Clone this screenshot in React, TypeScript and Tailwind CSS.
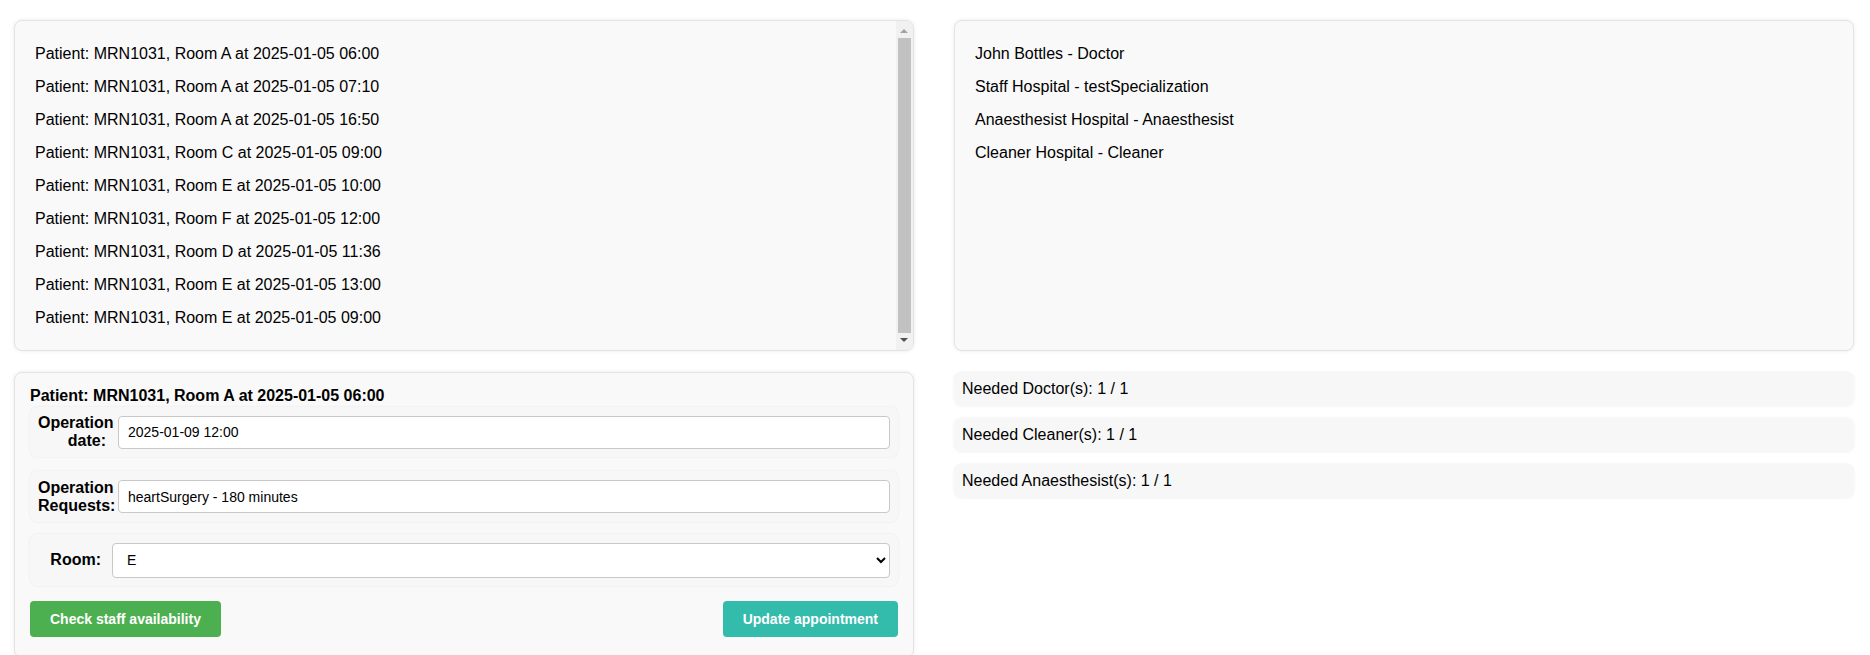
const APPOINTMENTS = [
  'Patient: MRN1031, Room A at 2025-01-05 06:00',
  'Patient: MRN1031, Room A at 2025-01-05 07:10',
  'Patient: MRN1031, Room A at 2025-01-05 16:50',
  'Patient: MRN1031, Room C at 2025-01-05 09:00',
  'Patient: MRN1031, Room E at 2025-01-05 10:00',
  'Patient: MRN1031, Room F at 2025-01-05 12:00',
  'Patient: MRN1031, Room D at 2025-01-05 11:36',
  'Patient: MRN1031, Room E at 2025-01-05 13:00',
  'Patient: MRN1031, Room E at 2025-01-05 09:00',
]

const STAFF = [
  'John Bottles - Doctor',
  'Staff Hospital - testSpecialization',
  'Anaesthesist Hospital - Anaesthesist',
  'Cleaner Hospital - Cleaner',
]

const NEEDED = [
  { role: 'Doctor', have: 1, need: 1 },
  { role: 'Cleaner', have: 1, need: 1 },
  { role: 'Anaesthesist', have: 1, need: 1 },
]

const panel = 'rounded-lg border border-[#e3e3e3] bg-[#f9f9f9] shadow-[0_0_4px_rgba(0,0,0,0.08)]'
const fieldBox = 'flex items-center rounded-lg bg-[#f7f7f7] px-2 shadow-[0_0_3px_rgba(0,0,0,0.07)]'
const inputCls =
  'h-[33px] flex-1 rounded-[4px] border border-[#c8c8c8] bg-white px-[9px] text-[14px] text-black outline-none'

// drawn scrollbar, sits over the right edge of the list
function ScrollBar() {
  return (
    <div className="pointer-events-none absolute bottom-0 right-0 top-0 w-[17px] bg-[#f1f1f1]">
      <span className="absolute left-[4px] top-[8px] h-0 w-0 border-x-[4px] border-b-[4px] border-x-transparent border-b-[#a3a3a3]" />
      <div className="absolute bottom-[17px] left-[2px] right-[2px] top-[17px] bg-[#c1c1c1]" />
      <span className="absolute bottom-[8px] left-[4px] h-0 w-0 border-x-[4px] border-t-[4px] border-x-transparent border-t-[#505050]" />
    </div>
  )
}

export default function App() {
  return (
    <div
      className="h-[655px] overflow-hidden bg-white text-black"
      style={{ fontFamily: '"Liberation Sans", Arial, sans-serif' }}
    >
      <div className="grid grid-cols-2 gap-x-[40px] pl-[14px] pr-[16px] pt-[20px]">
        {/* appointment list */}
        <div className={`${panel} relative h-[331px] overflow-hidden`}>
          <div className="h-full overflow-y-auto">
            <ul className="pb-[18px] pl-[20px] pt-[16px] text-[16px]">
              {APPOINTMENTS.map((a, i) => (
                <li key={i} className="flex h-[33px] items-center">
                  {a}
                </li>
              ))}
            </ul>
          </div>
          <ScrollBar />
        </div>

        {/* staff list */}
        <div className={`${panel} h-[331px]`}>
          <ul className="pl-[20px] pt-[16px] text-[16px]">
            {STAFF.map((s) => (
              <li key={s} className="flex h-[33px] items-center">
                {s}
              </li>
            ))}
          </ul>
        </div>

        {/* edit form */}
        <div className={`${panel} mt-[21px] px-[15px] pb-[20px] pt-[14px]`}>
          <div className="text-[16px] font-bold leading-[18px]">Patient: MRN1031, Room A at 2025-01-05 06:00</div>

          <div className={`${fieldBox} mt-[2px] h-[50px]`}>
            <div className="w-[68px] text-right text-[16px] font-bold leading-[18px]">Operation date:</div>
            <input className={`${inputCls} ml-[12px]`} defaultValue="2025-01-09 12:00" />
          </div>

          <div className={`${fieldBox} mt-[14px] h-[51px]`}>
            <div className="w-[68px] text-right text-[16px] font-bold leading-[18px]">Operation Requests:</div>
            <input className={`${inputCls} ml-[12px]`} defaultValue="heartSurgery - 180 minutes" />
          </div>

          <div className={`${fieldBox} mt-[12px] h-[52px]`}>
            <div className="w-[63px] text-right text-[16px] font-bold leading-[18px]">Room:</div>
            <select
              className="ml-[11px] h-[35px] flex-1 rounded-[4px] border border-[#c8c8c8] bg-white pl-[10px] text-[14px] text-black outline-none"
              defaultValue="E"
            >
              <option value="A">A</option>
              <option value="C">C</option>
              <option value="D">D</option>
              <option value="E">E</option>
              <option value="F">F</option>
            </select>
          </div>

          <div className="mt-[15px] flex justify-between">
            <button className="h-[36px] rounded-[4px] bg-[#4caf50] px-5 text-[14px] font-bold text-white">
              Check staff availability
            </button>
            <button className="h-[36px] rounded-[4px] bg-[#33bbac] px-5 text-[14px] font-bold text-white">
              Update appointment
            </button>
          </div>
        </div>

        {/* needed staff */}
        <div className="mt-[21px] flex flex-col gap-[12px]">
          {NEEDED.map((n) => (
            <div
              key={n.role}
              className="flex h-[34px] items-center rounded-lg bg-[#f7f7f7] px-2 text-[16px] shadow-[0_0_3px_rgba(0,0,0,0.07)]"
            >
              Needed {n.role}(s): {n.have} / {n.need}
            </div>
          ))}
        </div>
      </div>
    </div>
  )
}
